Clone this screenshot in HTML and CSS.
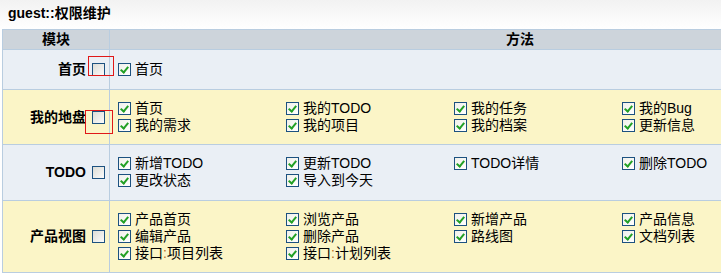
FILE: index.html
```html
<!DOCTYPE html>
<html lang="zh-CN">
<head>
  <meta charset="UTF-8" />
  <title>guest::权限维护</title>
  <link rel="stylesheet" href="styles.css">
</head>
<body>
  <div class="title">guest::权限维护</div>

  <table class="priv">
    <colgroup>
      <col class="col-mod" />
      <col />
    </colgroup>
    <thead>
      <tr><th>模块</th><th>方法</th></tr>
    </thead>
    <tbody>
      <tr class="odd first">
        <th class="mod">首页<span class="cb hl hl-a"></span></th>
        <td>
          <label class="item"><span class="cb on"></span>首页</label>
        </td>
      </tr>
      <tr class="even">
        <th class="mod">我的地盘<span class="cb hl hl-b"></span></th>
        <td>
          <label class="item"><span class="cb on"></span>首页</label><label class="item"><span class="cb on"></span>我的TODO</label><label class="item"><span class="cb on"></span>我的任务</label><label class="item"><span class="cb on"></span>我的Bug</label><label class="item"><span class="cb on"></span>我的需求</label><label class="item"><span class="cb on"></span>我的项目</label><label class="item"><span class="cb on"></span>我的档案</label><label class="item"><span class="cb on"></span>更新信息</label>
        </td>
      </tr>
      <tr class="odd tall">
        <th class="mod">TODO<span class="cb"></span></th>
        <td>
          <label class="item"><span class="cb on"></span>新增TODO</label><label class="item"><span class="cb on"></span>更新TODO</label><label class="item"><span class="cb on"></span>TODO详情</label><label class="item"><span class="cb on"></span>删除TODO</label><label class="item"><span class="cb on"></span>更改状态</label><label class="item"><span class="cb on"></span>导入到今天</label>
        </td>
      </tr>
      <tr class="even">
        <th class="mod">产品视图<span class="cb"></span></th>
        <td>
          <label class="item"><span class="cb on"></span>产品首页</label><label class="item"><span class="cb on"></span>浏览产品</label><label class="item"><span class="cb on"></span>新增产品</label><label class="item"><span class="cb on"></span>产品信息</label><label class="item"><span class="cb on"></span>编辑产品</label><label class="item"><span class="cb on"></span>删除产品</label><label class="item"><span class="cb on"></span>路线图</label><label class="item"><span class="cb on"></span>文档列表</label><label class="item"><span class="cb on"></span>接口<span class="colon">:</span>项目列表</label><label class="item"><span class="cb on"></span>接口<span class="colon">:</span>计划列表</label>
        </td>
      </tr>
    </tbody>
  </table>
</body>
</html>
```

FILE: styles.css
```css
html, body {
  margin: 0;
  padding: 0;
  background: #fff;
  color: #000;
  font-family: "Liberation Sans", "Noto Sans CJK SC", sans-serif;
  font-size: 14px;
  overflow: hidden;
}
.title {
  height: 29px;
  line-height: 27px;
  padding-left: 8px;
  font-size: 14px;
  font-weight: bold;
  background: linear-gradient(#f2f2f2, #fff);
}
.priv {
  border-collapse: collapse;
  table-layout: fixed;
  width: 929px;
  margin-left: 2px;
}
.col-mod { width: 107px; }
.priv th, .priv td {
  border: 1px solid #b9cde0;
  line-height: 17px;
}
.priv thead th {
  background: #cdd4db;
  padding: 1px 0;
  text-align: center;
  font-weight: bold;
}
.priv tbody th, .priv tbody td {
  padding: 10px 0;
  vertical-align: middle;
}
.priv tr.first th, .priv tr.first td {
  height: 19px;
}
.priv tr.tall th, .priv tr.tall td {
  padding-bottom: 11px;
}
.odd { background: #eaeff5; }
.even { background: #fbf5c7; }
.mod {
  text-align: right;
  padding-right: 4px !important;
  font-weight: bold;
  white-space: nowrap;
}
.priv td {
  padding-left: 8px !important;
}
.item {
  display: inline-block;
  width: 168px;
  white-space: nowrap;
}
.colon { color: #b86a1c; }

/* checkboxes */
.cb {
  display: inline-block;
  position: relative;
  box-sizing: border-box;
  width: 13px;
  height: 13px;
  border: 1px solid #1c5180;
  background: linear-gradient(135deg, #dcdcd6, #fbfbfb);
  vertical-align: -2px;
}
.mod .cb { margin-left: 6px; }
.item .cb { margin-right: 4px; }
.cb.on { background: linear-gradient(135deg, #f0f0ea, #fff); }
.cb.on::after {
  content: "";
  position: absolute;
  left: 3px;
  top: 1px;
  width: 3px;
  height: 6px;
  border-right: 2px solid #22a025;
  border-bottom: 2px solid #22a025;
  transform: rotate(40deg);
}

/* red annotation boxes */
.hl::before {
  content: "";
  position: absolute;
  border: 1px solid #e01818;
}
.hl-a::before { left: -5px; right: -10px; top: -8px; bottom: -1px; }
.hl-b::before { left: -8px; right: -9px; top: -2px; bottom: -11px; }
```
